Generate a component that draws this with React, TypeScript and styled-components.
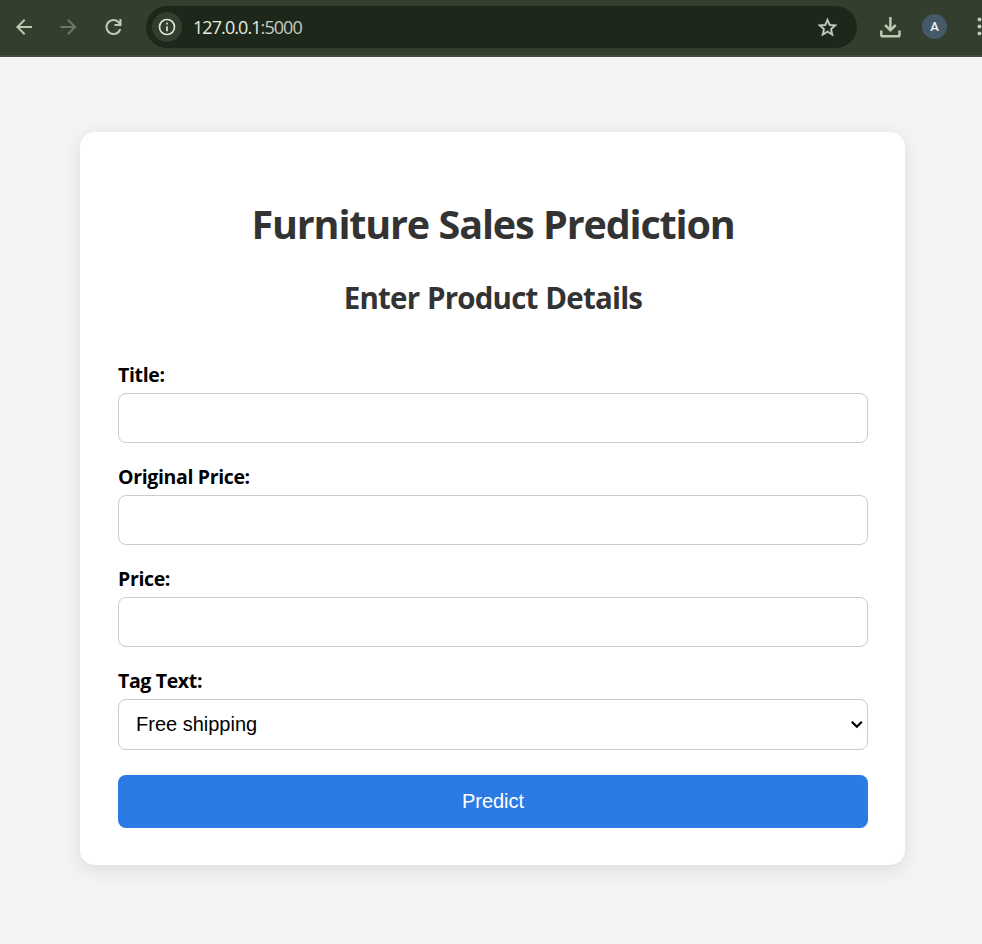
import React from "react";
import styled, { createGlobalStyle } from "styled-components";

const GlobalStyle = createGlobalStyle`
  * { box-sizing: border-box; }
  body { margin: 0; background: #f4f4f4; overflow: hidden; }
`;

const Page = styled.div`
  height: 944px;
  overflow: hidden;
  background: #f4f4f4;
  font-family: "Segoe UI", "Open Sans", "Noto Sans", sans-serif;
`;

const Toolbar = styled.header`
  display: flex;
  height: 57px;
  padding-top: 6px;
  background: #333e2e;
  border-bottom: 2px solid #484b44;
  overflow: hidden;
`;

const NavButtons = styled.nav`
  display: flex;
  width: 146px;
  height: 41px;
  flex: none;
  align-items: center;
  padding-left: 12px;
  gap: 20px;
`;

const Glyph = styled.svg<{ $color?: string }>`
  display: block;
  flex: none;
  color: ${(p) => p.$color ?? "#b9cbb0"};
`;

const AddressBar = styled.div`
  display: flex;
  align-items: center;
  width: 711px;
  height: 42px;
  flex: none;
  padding: 0 18px 0 6px;
  border-radius: 21px;
  background: #1e281a;
`;

const SiteInfo = styled.span`
  display: grid;
  place-items: center;
  width: 30px;
  height: 30px;
  border-radius: 50%;
  background: #333e2e;
`;

const Address = styled.span`
  flex: 1;
  margin-left: 11px;
  font-size: 18px;
  line-height: 24px;
  letter-spacing: -0.93px;
  color: #c6cbc0;
`;

const Host = styled.span`
  color: #e6ebdf;
`;

const Actions = styled.div`
  display: flex;
  height: 42px;
  flex: none;
  align-items: center;
  padding-left: 21px;
`;

const Avatar = styled.span`
  width: 25px;
  height: 25px;
  margin: -1px 30px 0 20px;
  border-radius: 50%;
  background: #455a68;
  color: #f2f5f7;
  font: 500 13px/26px Roboto, sans-serif;
  text-align: center;
`;

const Card = styled.main`
  width: 825px;
  height: 733px;
  margin: 75px 0 0 80px;
  padding: 65px 37px 0 38px;
  border-radius: 15px;
  background: #fff;
  box-shadow: 0 5px 19px rgba(0, 0, 0, 0.1);
`;

const Heading = styled.h1`
  margin: 0;
  color: #333;
  font-size: 39.5px;
  font-weight: 700;
  line-height: 54px;
  letter-spacing: -1.16px;
  word-spacing: 0.5px;
  text-align: center;
  white-space: nowrap;
`;

const Subheading = styled.h2`
  margin: 27px 0 48px;
  color: #333;
  font-size: 29.5px;
  font-weight: 700;
  line-height: 40px;
  letter-spacing: -0.8px;
  word-spacing: 0.8px;
  text-align: center;
`;

const Field = styled.div`
  display: flex;
  flex-direction: column;
  margin-bottom: 25px;
`;

const Label = styled.label`
  height: 27px;
  margin-bottom: 5px;
  padding-top: 1px;
  margin-top: -5px;
  align-self: flex-start;
  color: #000;
  font-size: 19.5px;
  font-weight: 700;
  line-height: 25px;
  letter-spacing: -0.35px;
`;

const Input = styled.input`
  width: 100%;
  height: 50px;
  padding: 0 17px;
  border: 1px solid #ccc;
  border-radius: 8px;
  background: #fff;
  outline: none;
  font: 20px "Liberation Sans", Arial, sans-serif;
`;

const Select = styled.button`
  display: flex;
  align-items: center;
  justify-content: space-between;
  width: 100%;
  height: 51px;
  padding: 0 4px 1px 17px;
  border: 1px solid #ccc;
  border-radius: 8px;
  background: #fff;
  color: #000;
  font: 20px "Liberation Sans", Arial, sans-serif;
`;

const Submit = styled.button`
  display: block;
  width: 100%;
  height: 53px;
  padding: 0;
  border: 0;
  border-radius: 8px;
  background: #2c7be5;
  color: #fff;
  font: 20px "Liberation Sans", Arial, sans-serif;
`;

const textFields = [
  { id: "title", label: "Title:" },
  { id: "original-price", label: "Original Price:" },
  { id: "price", label: "Price:" },
];

export default function App() {
  return (
    <Page>
      <GlobalStyle />
      <Toolbar>
        <NavButtons>
          <Glyph width="24" height="24" viewBox="0 0 24 24" fill="currentColor">
            <path d="M20 11H7.83l5.59-5.59L12 4l-8 8 8 8 1.41-1.41L7.83 13H20z" />
          </Glyph>
          <Glyph $color="#6b7865" width="25" height="24" viewBox="0 0 24 24" fill="currentColor">
            <path d="m12 4-1.41 1.41L16.17 11H4v2h12.17l-5.58 5.59L12 20l8-8z" />
          </Glyph>
          <Glyph width="25" height="24" viewBox="0 0 24 24" fill="currentColor">
            <path d="M12 20c-4.42 0-8-3.58-8-8s3.58-8 8-8c2.34 0 4.42 1 5.9 2.7V4H20v7h-7V9h4.2A6 6 0 1 0 17.65 14h2.1A8 8 0 0 1 12 20z" />
          </Glyph>
        </NavButtons>
        <AddressBar>
          <SiteInfo>
            <Glyph $color="#e0e6da" width="20" height="20" viewBox="0 0 24 24" fill="currentColor">
              <path d="M11 7h2v2h-2zm0 4h2v6h-2zm1-9a10 10 0 1 0 0 20 10 10 0 0 0 0-20zm0 18a8 8 0 1 1 0-16 8 8 0 0 1 0 16z" />
            </Glyph>
          </SiteInfo>
          <Address>
            <Host>127.0.0.1</Host>:5000
          </Address>
          <Glyph $color="#c6ccc0" width="23" height="23" viewBox="0 0 24 24" fill="currentColor" stroke="currentColor" strokeWidth="0.4">
            <path d="m22 9.24-7.19-.62L12 2 9.19 8.63 2 9.24l5.46 4.73L5.82 21 12 17.27 18.18 21l-1.63-7.03zM12 15.4l-3.76 2.27 1-4.28-3.32-2.88 4.38-.38L12 6.1l1.71 4.04 4.38.38-3.32 2.88 1 4.28z" />
          </Glyph>
        </AddressBar>
        <Actions>
          <Glyph width="24" height="24" viewBox="0 0 24 24" fill="none" stroke="currentColor" strokeWidth="2.5">
            <path d="M12.4 2v13M7.1 10l5.3 5.3 5.3-5.3M3.3 15.5v4.2q0 1.6 1.6 1.6h15q1.6 0 1.6-1.6v-4.2" />
          </Glyph>
          <Avatar>A</Avatar>
          <Glyph width="20" height="24" viewBox="0 0 20 24" fill="currentColor">
            <circle cx="2.5" cy="4.5" r="2" />
            <circle cx="2.5" cy="11.5" r="2" />
            <circle cx="2.5" cy="18.5" r="2" />
          </Glyph>
        </Actions>
      </Toolbar>
      <Card>
        <Heading>Furniture Sales Prediction</Heading>
        <Subheading>Enter Product Details</Subheading>
        {textFields.map((field) => (
          <Field key={field.id}>
            <Label htmlFor={field.id}>{field.label}</Label>
            <Input id={field.id} />
          </Field>
        ))}
        <Field>
          <Label htmlFor="tag-text">Tag Text:</Label>
          <Select id="tag-text" type="button">
            Free shipping
            <svg width="13" height="10" viewBox="0 0 13 10" fill="none" stroke="#000" strokeWidth="2.2">
              <path d="M1.8 2.7 6.8 7.7l5-5" />
            </svg>
          </Select>
        </Field>
        <Submit type="button">Predict</Submit>
      </Card>
    </Page>
  );
}
